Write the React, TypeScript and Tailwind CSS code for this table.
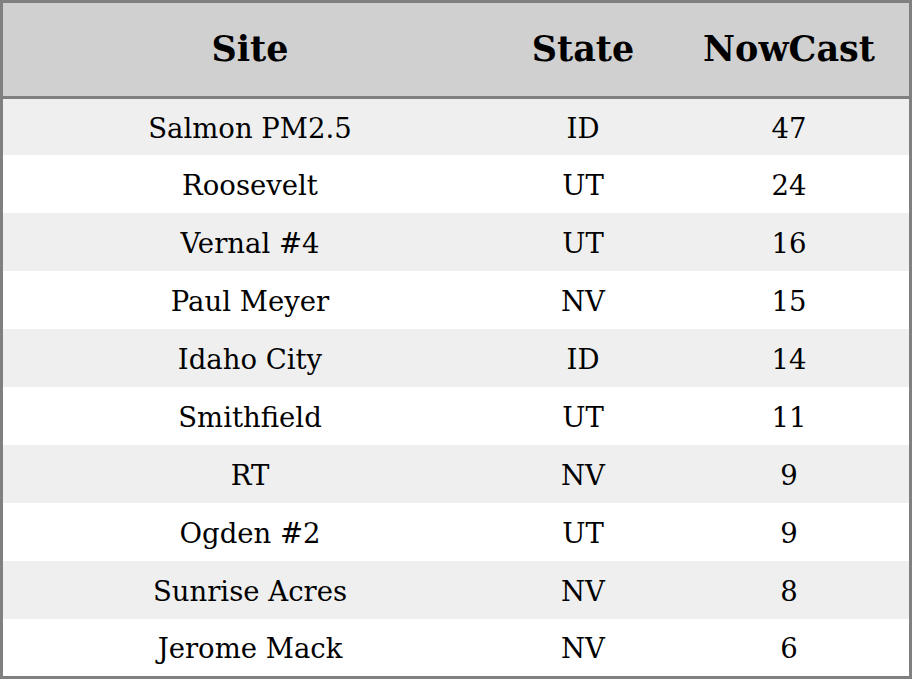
const rows = [
  { site: "Salmon PM2.5", state: "ID", nowcast: 47 },
  { site: "Roosevelt", state: "UT", nowcast: 24 },
  { site: "Vernal #4", state: "UT", nowcast: 16 },
  { site: "Paul Meyer", state: "NV", nowcast: 15 },
  { site: "Idaho City", state: "ID", nowcast: 14 },
  { site: "Smithfield", state: "UT", nowcast: 11 },
  { site: "RT", state: "NV", nowcast: 9 },
  { site: "Ogden #2", state: "UT", nowcast: 9 },
  { site: "Sunrise Acres", state: "NV", nowcast: 8 },
  { site: "Jerome Mack", state: "NV", nowcast: 6 },
];

const heights = ["h-[56px]", "h-[58px]", "h-[58px]", "h-[58px]", "h-[58px]", "h-[58px]", "h-[58px]", "h-[58px]", "h-[58px]", "h-[57px]"];

export default function App() {
  return (
    <div className="w-[912px] h-[679px] bg-white font-['DejaVu_Serif',serif] text-black">
      <div className="border-[3px] border-[#808080] h-full flex flex-col">
        <div className="grid grid-cols-[494px_172px_240px] h-[96px] shrink-0 bg-[#d0d0d0] border-b-[3px] border-[#808080] text-[35px] font-bold">
          <div className="flex items-center justify-center">Site</div>
          <div className="flex items-center justify-center">State</div>
          <div className="flex items-center justify-center">NowCast</div>
        </div>
        {rows.map((r, i) => (
          <div
            key={i}
            className={`grid grid-cols-[494px_172px_240px] ${heights[i]} shrink-0 pt-[3px] text-[27.5px] ${i % 2 === 0 ? "bg-[#efefef]" : "bg-white"}`}
          >
            <div className="flex items-center justify-center">{r.site}</div>
            <div className="flex items-center justify-center">{r.state}</div>
            <div className="flex items-center justify-center">{r.nowcast}</div>
          </div>
        ))}
      </div>
    </div>
  );
}
